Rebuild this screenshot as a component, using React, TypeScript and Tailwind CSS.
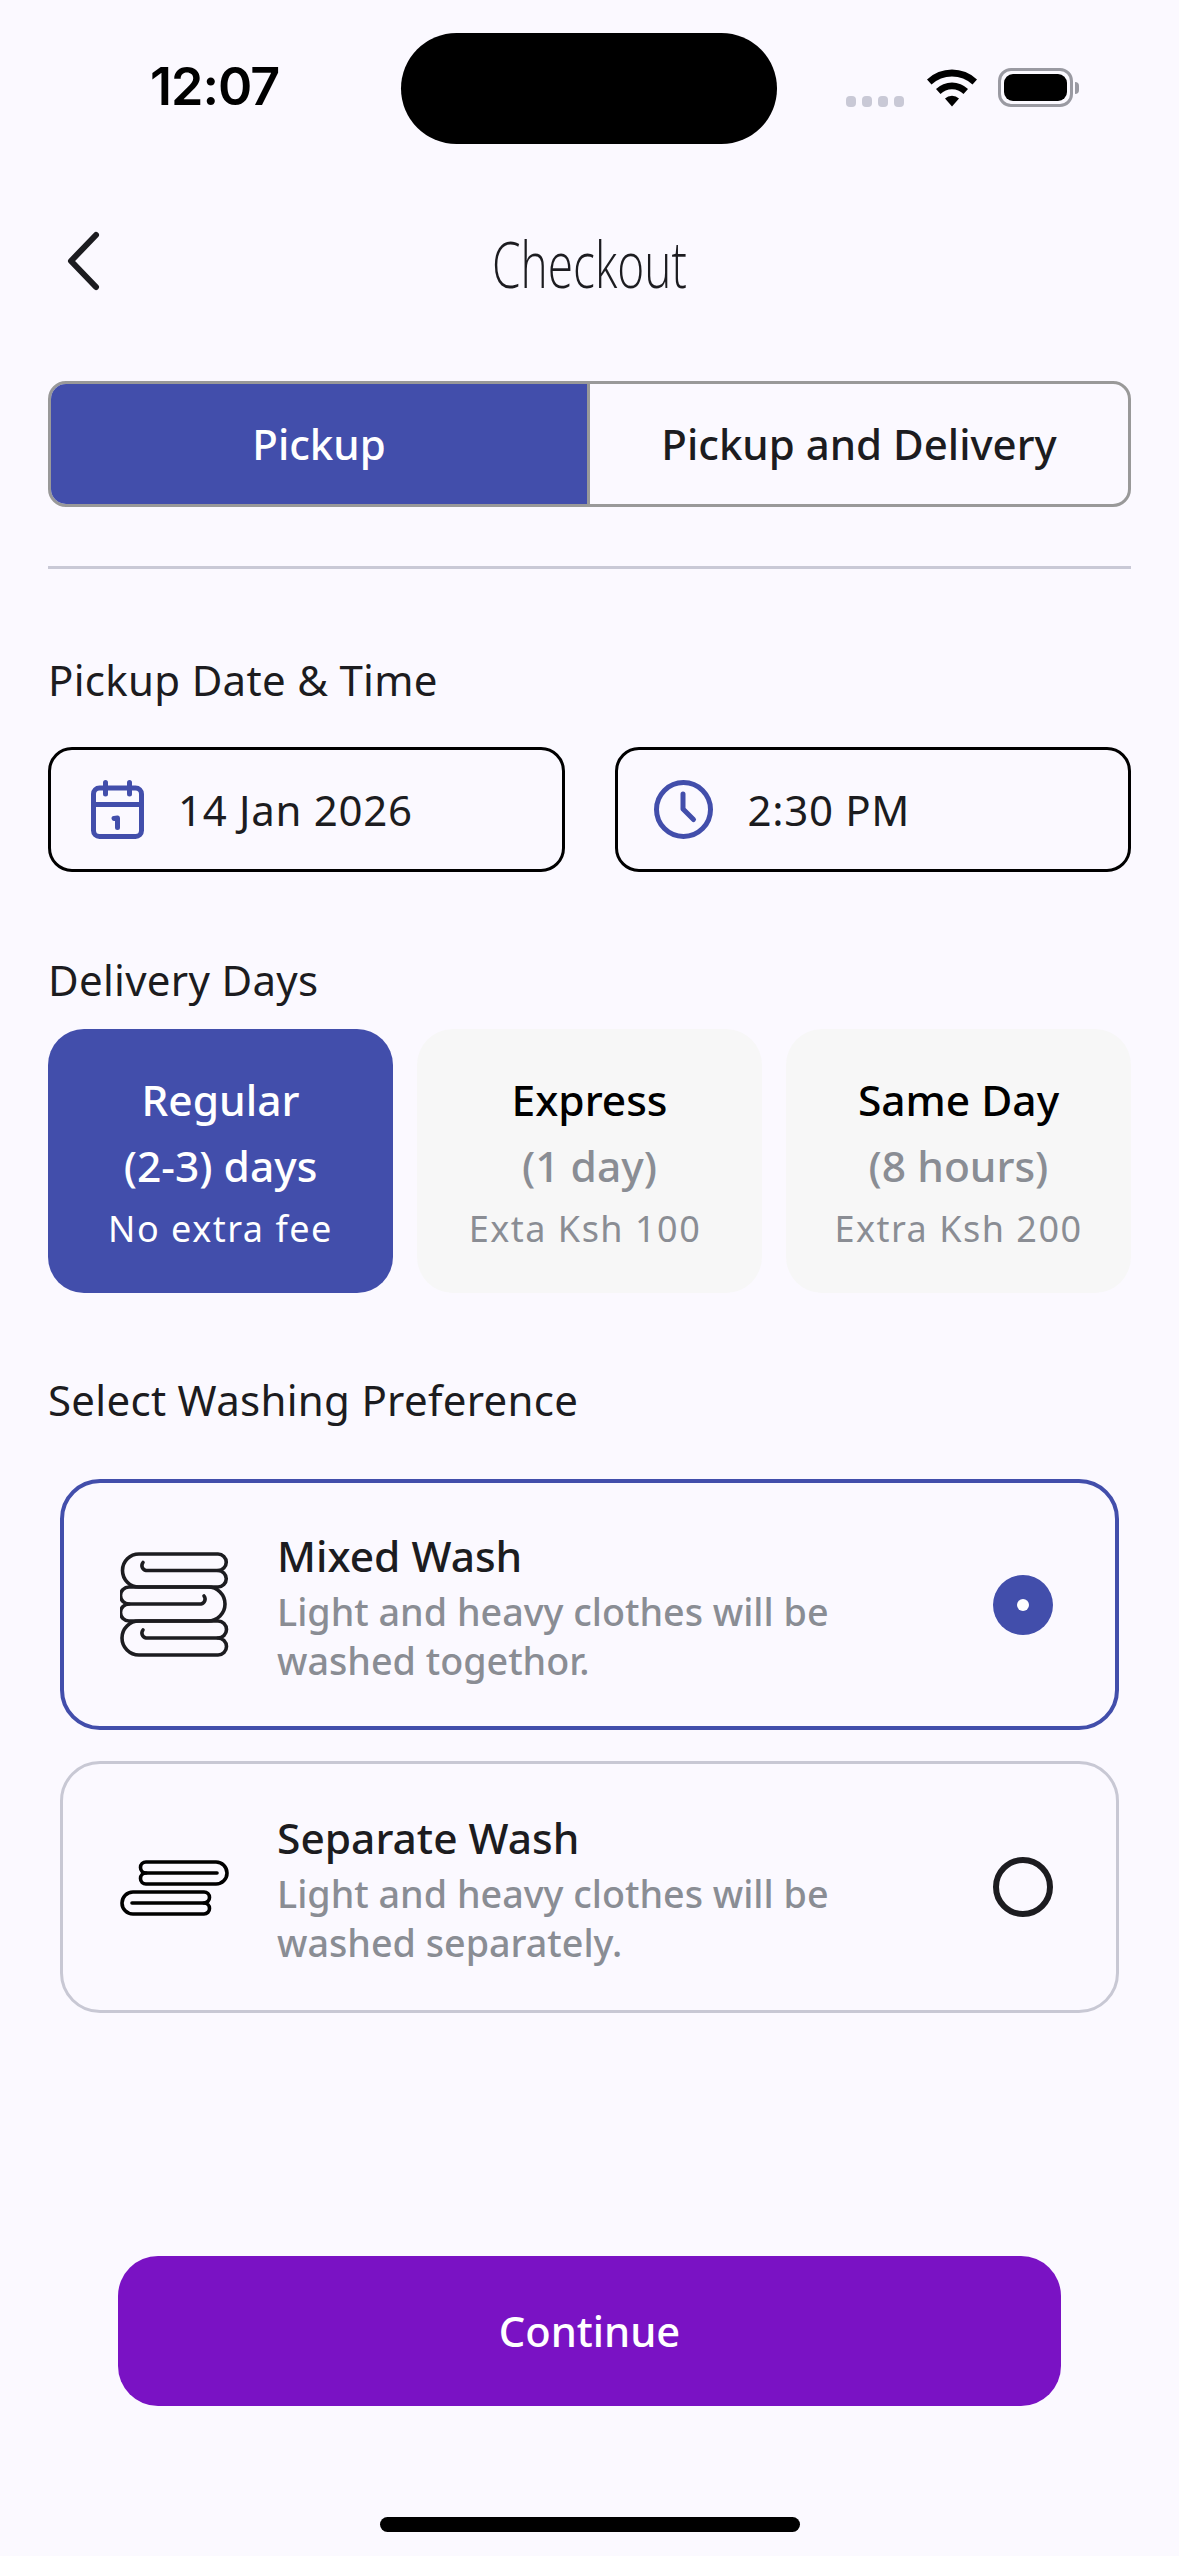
import React from "react";

const Ink = "#1c1c20";
const Blue = "#424eab";

function Wifi() {
  return (
    <svg width="50" height="38" viewBox="0 0 50 38" className="mt-[69px] ml-[23px] block shrink-0">
      <path d="M0 10.5 A36 36 0 0 1 50 10.5 L45.5 15.5 A30 30 0 0 0 4.5 15.5 Z" fill="#000" />
      <path d="M9 20 A23 23 0 0 1 41 20 L36.5 25 A16.5 16.5 0 0 0 13.5 25 Z" fill="#000" />
      <path d="M18 29.5 A10 10 0 0 1 32 29.5 L25 37.5 Z" fill="#000" />
    </svg>
  );
}

function Battery() {
  return (
    <div className="mt-[68px] ml-[21px] flex shrink-0 items-center">
      <div className="flex h-[39px] w-[75px] items-center justify-center rounded-[13px] border-[3px] border-[#9a9aa2]">
        <div className="h-[27px] w-[63px] rounded-[9px] bg-black" />
      </div>
      <div className="ml-[2px] h-[12px] w-[4px] rounded-r-[4px] bg-[#9a9aa2]" />
    </div>
  );
}

function Calendar() {
  return (
    <svg width="53" height="59" viewBox="0 0 53 59" fill="none" stroke={Blue} strokeWidth="5" strokeLinecap="round" strokeLinejoin="round" className="shrink-0">
      <rect x="2.5" y="8" width="48" height="48.5" rx="6" />
      <path d="M2.5 24.5H50.5" />
      <path d="M14.5 2.5V14" />
      <path d="M38.5 2.5V14" />
      <path d="M23 38.5L26.5 38V47.5" />
    </svg>
  );
}

function Clock() {
  return (
    <svg width="59" height="59" viewBox="0 0 59 59" fill="none" stroke={Blue} strokeWidth="5" strokeLinecap="round" strokeLinejoin="round" className="shrink-0">
      <circle cx="29.5" cy="29.5" r="27" />
      <path d="M29 14V29L39.5 39.5" />
    </svg>
  );
}

function MixedIcon() {
  return (
    <svg width="110" height="110" viewBox="0 0 110 110" fill="none" stroke={Ink} strokeWidth="3.6" strokeLinecap="round" strokeLinejoin="round" className="shrink-0">
      <path d="M19 4H98a8 8 0 0 1 0 16.5a8.25 8.25 0 0 1 0 16.5H19a16.5 16.5 0 0 1 0-33Z" />
      <path d="M98 20.5H26a5 5 0 0 1-3-8" />
      <path d="M9 37H88a17 17 0 0 1 0 34H9a8.5 8.5 0 0 1 0-17a8.5 8.5 0 0 1 0-17Z" />
      <path d="M9 54H81a5 5 0 0 0 3-8" />
      <path d="M19 71H98a8.5 8.5 0 0 1 0 17a8.5 8.5 0 0 1 0 17H19a17 17 0 0 1 0-34Z" />
      <path d="M98 88H26a5 5 0 0 1-3-8" />
    </svg>
  );
}

function SeparateIcon() {
  return (
    <svg width="110" height="62" viewBox="0 0 110 62" fill="none" stroke="#000" strokeWidth="3.6" strokeLinecap="round" strokeLinejoin="round" className="shrink-0">
      <path d="M26 6H96a11 11 0 0 1 0 22H26a5.5 5.5 0 0 1 0-11a5.5 5.5 0 0 1 0-11Z" />
      <path d="M26 17H97" />
      <path d="M13 36H84a5.5 5.5 0 0 1 0 11a5.5 5.5 0 0 1 0 11H13a11 11 0 0 1 0-22Z" />
      <path d="M12 47H84" />
    </svg>
  );
}

function Field({ icon, text, cls }: { icon: React.ReactNode; text: string; cls: string }) {
  return (
    <div className={`flex h-[125px] items-center rounded-[24px] border-[3px] border-black ${cls}`}>
      {icon}
      <span className="text-[42px] leading-none tracking-[0.7px] text-[#1c1c20]">{text}</span>
    </div>
  );
}

function Day({ a, b, c, active, pad }: { a: string; b: string; c: string; active?: boolean; pad?: string }) {
  return (
    <div className={`flex h-[264px] flex-1 flex-col items-center rounded-[36px] pt-[42px] ${active ? "bg-[#424eab] text-white" : "bg-[#f7f7f7] text-black"}`}>
      <div className="h-[58px] text-[42.5px] leading-[58px] font-medium">{a}</div>
      <div className={`mt-[8px] h-[58px] text-[42.5px] leading-[58px] font-medium ${active ? "text-white" : "text-[#8a8d94]"}`}>{b}</div>
      <div className={`mt-[9px] text-[36px] leading-[50px] tracking-[1.5px] ${pad ?? ""} ${active ? "text-white" : "text-[#8a8d94]"}`}>{c}</div>
    </div>
  );
}

function Option({ icon, title, l1, l2, active }: { icon: React.ReactNode; title: string; l1: string; l2: string; active?: boolean }) {
  return (
    <div className={`mx-[12px] flex items-center rounded-[40px] ${active ? "h-[251px] border-[4px] border-[#424eab]" : "h-[252px] border-[3px] border-[#c8c8d4]"}`}>
      <div className={`flex w-[110px] shrink-0 items-center justify-center ${active ? "ml-[56px]" : "ml-[57px]"}`}>{icon}</div>
      <div className="ml-[47px] flex-1">
        <div className="text-[42.5px] leading-[62px] font-medium text-[#1c1c20]">{title}</div>
        <div className="text-[37.7px] leading-[49px] font-medium text-[#8a8d94]">
          {l1}
          <br />
          {l2}
        </div>
      </div>
      {active ? (
        <div className="mr-[62px] flex h-[60px] w-[60px] items-center justify-center rounded-full bg-[#424eab]">
          <div className="h-[12px] w-[12px] rounded-full bg-white" />
        </div>
      ) : (
        <div className="mr-[63px] h-[60px] w-[60px] rounded-full border-[6px] border-[#1c1c20]" />
      )}
    </div>
  );
}

export default function App() {
  return (
    <div className="flex h-[2556px] w-[1179px] flex-col overflow-hidden bg-[#fbf9ff] font-['Noto_Sans',sans-serif] text-[#1c1c20]">
      {/* status bar */}
      <div className="flex h-[220px] shrink-0 items-start">
        <div className="mt-[58px] ml-[150px] w-[251px] font-['Inter',sans-serif] text-[52px] leading-[58px] font-semibold tracking-[-1px] text-black">12:07</div>
        <div className="mt-[33px] h-[111px] w-[376px] rounded-full bg-black" />
        <div className="mt-[96px] ml-[69px] flex shrink-0 gap-[6px]">
          <div className="h-[11px] w-[10px] rounded-[4px] bg-[#c9c9d6]" />
          <div className="h-[11px] w-[10px] rounded-[4px] bg-[#c9c9d6]" />
          <div className="h-[11px] w-[10px] rounded-[4px] bg-[#c9c9d6]" />
          <div className="h-[11px] w-[10px] rounded-[4px] bg-[#c9c9d6]" />
        </div>
        <Wifi />
        <Battery />
      </div>

      <div className="px-[48px]">
        {/* header */}
        <div className="mt-[4px] flex h-[80px] items-center">
          <svg width="36" height="60" viewBox="0 0 36 60" fill="none" stroke={Ink} strokeWidth="6" strokeLinecap="round" strokeLinejoin="round" className="mb-[6px] ml-[19px] shrink-0">
            <path d="M29 4L4 30L29 56" />
          </svg>
          <div className="-ml-[55px] flex-1 text-center">
            <span className="inline-block origin-center scale-x-[0.72] font-['Open_Sans',sans-serif] text-[64px] leading-[80px] font-light text-[#1c1c20]">Checkout</span>
          </div>
        </div>

        {/* segmented */}
        <div className="mt-[77px] flex h-[126px] overflow-hidden rounded-[18px] border-[3px] border-[#999999]">
          <div className="flex w-[536px] items-center justify-center bg-[#424eab] pb-[2px] text-[42px] font-medium text-white">Pickup</div>
          <div className="flex flex-1 items-center justify-center border-l-[3px] border-[#999999] pb-[2px] text-[42px] font-medium text-[#1c1c20]">Pickup and Delivery</div>
        </div>

        <div className="mt-[59px] h-[3px] bg-[#c9c9d6]" />

        {/* pickup */}
        <div className="mt-[83px] text-[42px] leading-[56px] tracking-[0.3px]">Pickup Date &amp; Time</div>
        <div className="mt-[39px] grid grid-cols-2 gap-[50px]">
          <Field icon={<Calendar />} text="14 Jan 2026" cls="gap-[34px] pl-[40px]" />
          <Field icon={<Clock />} text="2:30 PM" cls="gap-[35px] pl-[36px]" />
        </div>

        {/* delivery */}
        <div className="mt-[80px] text-[42px] leading-[56px] tracking-[0.3px]">Delivery Days</div>
        <div className="mt-[21px] flex gap-[24px]">
          <Day a="Regular" b="(2-3) days" c="No extra fee" active />
          <Day a="Express" b="(1 day)" c="Exta Ksh 100" pad="pr-[9px]" />
          <Day a="Same Day" b="(8 hours)" c="Extra Ksh 200" />
        </div>

        {/* preference */}
        <div className="mt-[79px] text-[42px] leading-[56px] tracking-[0.3px]">Select Washing Preference</div>
        <div className="mt-[51px] flex flex-col gap-[31px]">
          <Option icon={<MixedIcon />} title="Mixed Wash" l1="Light and heavy clothes will be" l2="washed togethor." active />
          <Option icon={<SeparateIcon />} title="Separate Wash" l1="Light and heavy clothes will be" l2="washed separately." />
        </div>

        {/* continue */}
        <div className="mx-[70px] mt-[243px] flex h-[150px] items-center justify-center rounded-[40px] bg-[#7a12c4] text-[41.7px] font-medium text-white">Continue</div>
      </div>

      <div className="mx-auto mt-[111px] h-[15px] w-[420px] rounded-full bg-black" />
    </div>
  );
}
